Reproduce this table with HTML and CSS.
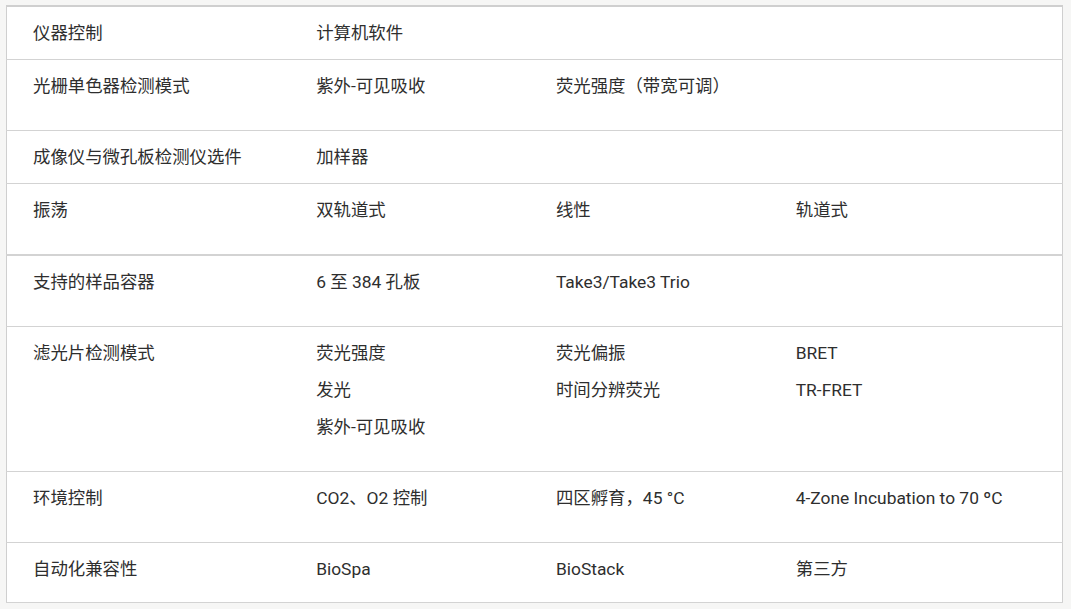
FILE: index.html
```html
<!DOCTYPE html>
<html lang="zh-CN">
<head>
<meta charset="utf-8">
<link rel="stylesheet" href="styles.css">
</head>
<body>
<div class="wrap">
<table class="spec">
  <colgroup>
    <col class="c1"><col class="c2"><col class="c3"><col class="c4">
  </colgroup>
  <tbody>
    <tr>
      <td>仪器控制</td>
      <td>计算机软件</td>
      <td></td>
      <td></td>
    </tr>
    <tr>
      <td>光栅单色器检测模式</td>
      <td><p>紫外-可见吸收</p></td>
      <td><p>荧光强度（带宽可调）</p></td>
      <td></td>
    </tr>
    <tr>
      <td>成像仪与微孔板检测仪选件</td>
      <td>加样器</td>
      <td></td>
      <td></td>
    </tr>
    <tr>
      <td>振荡</td>
      <td><p>双轨道式</p></td>
      <td><p>线性</p></td>
      <td><p>轨道式</p></td>
    </tr>
    <tr class="thick">
      <td>支持的样品容器</td>
      <td><p>6 至 384 孔板</p></td>
      <td><p>Take3/Take3 Trio</p></td>
      <td></td>
    </tr>
    <tr>
      <td>滤光片检测模式</td>
      <td><p>荧光强度</p><p>发光</p><p>紫外-可见吸收</p></td>
      <td><p>荧光偏振</p><p>时间分辨荧光</p></td>
      <td><p>BRET</p><p>TR-FRET</p></td>
    </tr>
    <tr>
      <td>环境控制</td>
      <td><p>CO2、O2 控制</p></td>
      <td><p>四区孵育，45 °C</p></td>
      <td><p>4-Zone Incubation to 70 ºC</p></td>
    </tr>
    <tr class="last">
      <td>自动化兼容性</td>
      <td>BioSpa</td>
      <td>BioStack</td>
      <td>第三方</td>
    </tr>
  </tbody>
</table>
</div>
</body>
</html>
```

FILE: styles.css
```css
html, body {
  margin: 0;
  padding: 0;
  background: #f6f6f5;
}
.wrap {
  padding: 5px 8px 0 6px;
}
.spec {
  width: 1057px;
  border-collapse: collapse;
  background: #ffffff;
  border-top: 2px solid #cfcfcf;
  border-left: 1px solid #cfcfcf;
  border-right: 1px solid #cfcfcf;
  border-bottom: 1px solid #cfcfcf;
  font-family: Roboto, "Noto Sans CJK SC", sans-serif;
  font-size: 17.4px;
  color: #2e2e2e;
}
.c1 { width: 284px; }
.c2 { width: 240px; }
.c3 { width: 240px; }
.c4 { width: 293px; }
.spec td {
  vertical-align: top;
  padding: 17px 10px 16px 26px;
  line-height: 19px;
  border-bottom: 1px solid #d3d3d3;
}
.spec td p {
  margin: 0 0 18px 0;
}
.spec tr.thick td {
  border-top: 2px solid #d3d3d3;
}
.spec tr.last td {
  padding-bottom: 23px;
}
```
